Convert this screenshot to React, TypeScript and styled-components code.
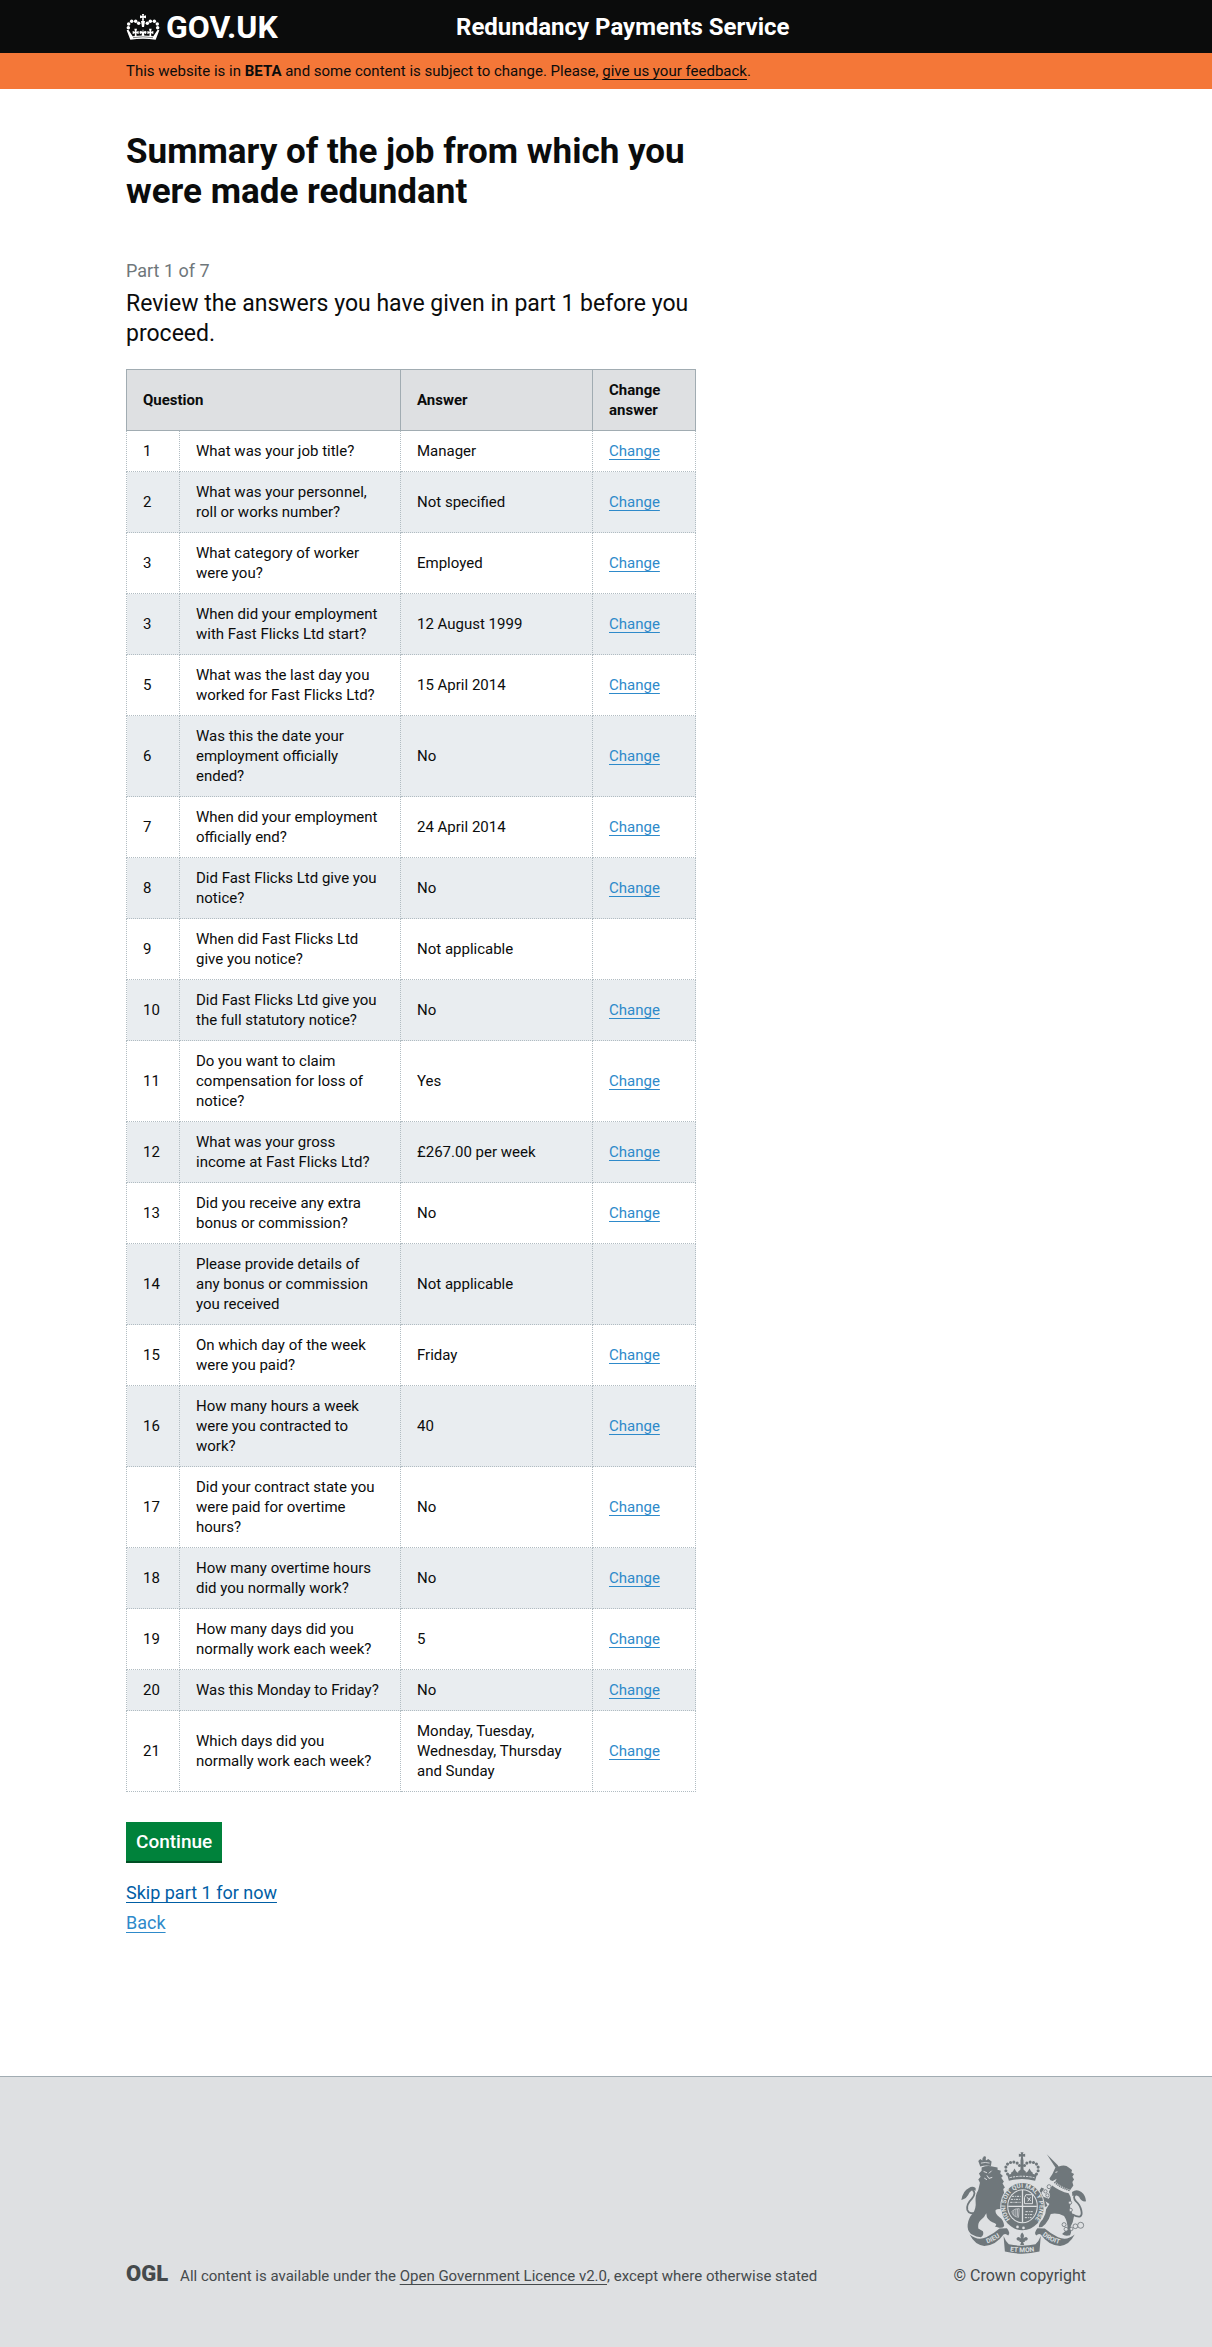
import React from "react";
import styled, { createGlobalStyle } from "styled-components";

const GlobalStyle = createGlobalStyle`
  body {
    margin: 0;
    background: #fff;
    color: #0b0c0c;
    font-family: Roboto, "Liberation Sans", Arial, sans-serif;
  }
  *, *::before, *::after { box-sizing: border-box; }
`;

const Container = styled.div`
  max-width: 960px;
  margin: 0 auto;
`;

const Header = styled.header`
  background: #0b0c0c;
  color: #fff;
`;

const HeaderInner = styled(Container)`
  display: grid;
  grid-template-columns: 1fr 2fr;
  column-gap: 15px;
  align-items: center;
  height: 53px;
`;

const LogoLink = styled.a`
  display: flex;
  align-items: center;
  gap: 6px;
  color: #fff;
  font-size: 32px;
  font-weight: 700;
  line-height: 40px;
  text-decoration: none;

  svg {
    display: block;
  }
`;

const ServiceName = styled.div`
  font-size: 24px;
  font-weight: 700;
  line-height: 30px;
`;

const BetaBar = styled.div`
  background: #f47738;
  font-size: 15px;
  line-height: 20px;
  padding: 8px 0;
`;

const TextLink = styled.a<{ $color: string }>`
  color: ${(p) => p.$color};
  text-decoration: underline;
  text-decoration-thickness: 1px;
  text-underline-offset: 3px;
  text-decoration-skip-ink: none;
`;

const Content = styled.div`
  max-width: 570px;
  padding: 43px 0 138px;
`;

const Title = styled.h1`
  margin: 0 0 46px;
  font-size: 35px;
  font-weight: 700;
  line-height: 40px;
`;

const PartLabel = styled.p`
  margin: 0 0 6px;
  color: #6f777b;
  font-size: 18px;
  line-height: 25px;
`;

const Lead = styled.p`
  margin: 0 0 20px;
  font-size: 23px;
  line-height: 30px;
`;

const Table = styled.table`
  width: 100%;
  table-layout: fixed;
  border-collapse: collapse;
  font-size: 15px;
  line-height: 20px;

  tbody tr:nth-child(even) {
    background: #e9edf0;
  }
`;

const Col = styled.col<{ $width: string }>`
  width: ${(p) => p.$width};
`;

const HeadCell = styled.th`
  padding: 10px 16px;
  background: #dee0e2;
  border: 1px solid #a1acb2;
  font-weight: 700;
  text-align: left;
  vertical-align: middle;
`;

const Cell = styled.td`
  padding: 10px 16px;
  border: 1px dotted #b1bcc2;
  vertical-align: middle;
`;

const Actions = styled.div`
  display: flex;
  flex-direction: column;
  align-items: flex-start;
  margin-top: 30px;
  font-size: 18px;
  line-height: 30px;
`;

const ContinueButton = styled.button`
  margin: 0 0 17px;
  padding: 7px 10px;
  border: 0;
  background: #00823b;
  box-shadow: 0 2px 0 #004f24;
  color: #fff;
  font: 500 19px/25px Roboto, "Liberation Sans", Arial, sans-serif;
  cursor: pointer;
`;

const Footer = styled.footer`
  padding: 75px 0 61px;
  background: #dee0e2;
  border-top: 1px solid #a1acb2;
  color: #454a4c;
  font-size: 15px;
  line-height: 20px;
`;

const FooterInner = styled(Container)`
  display: flex;
  align-items: flex-end;
  justify-content: space-between;
`;

const Licence = styled.div`
  display: flex;
  align-items: baseline;
  gap: 12px;
`;

const OglMark = styled.span`
  font-size: 22px;
  font-weight: 900;
`;

const Copyright = styled.div`
  display: flex;
  flex-direction: column;
  align-items: flex-end;
  gap: 12px;
  font-size: 16px;

  svg {
    display: block;
  }
`;

type Answer = { no: number; question: string; answer: string; fixed?: boolean };

const answers: Answer[] = [
  { no: 1, question: "What was your job title?", answer: "Manager" },
  { no: 2, question: "What was your personnel, roll or works number?", answer: "Not specified" },
  { no: 3, question: "What category of worker were you?", answer: "Employed" },
  { no: 3, question: "When did your employment with Fast Flicks Ltd start?", answer: "12 August 1999" },
  { no: 5, question: "What was the last day you worked for Fast Flicks Ltd?", answer: "15 April 2014" },
  { no: 6, question: "Was this the date your employment officially ended?", answer: "No" },
  { no: 7, question: "When did your employment officially end?", answer: "24 April 2014" },
  { no: 8, question: "Did Fast Flicks Ltd give you notice?", answer: "No" },
  { no: 9, question: "When did Fast Flicks Ltd give you notice?", answer: "Not applicable", fixed: true },
  { no: 10, question: "Did Fast Flicks Ltd give you the full statutory notice?", answer: "No" },
  { no: 11, question: "Do you want to claim compensation for loss of notice?", answer: "Yes" },
  { no: 12, question: "What was your gross income at Fast Flicks Ltd?", answer: "£267.00 per week" },
  { no: 13, question: "Did you receive any extra bonus or commission?", answer: "No" },
  { no: 14, question: "Please provide details of any bonus or commission you received", answer: "Not applicable", fixed: true },
  { no: 15, question: "On which day of the week were you paid?", answer: "Friday" },
  { no: 16, question: "How many hours a week were you contracted to work?", answer: "40" },
  { no: 17, question: "Did your contract state you were paid for overtime hours?", answer: "No" },
  { no: 18, question: "How many overtime hours did you normally work?", answer: "No" },
  { no: 19, question: "How many days did you normally work each week?", answer: "5" },
  { no: 20, question: "Was this Monday to Friday?", answer: "No" },
  { no: 21, question: "Which days did you normally work each week?", answer: "Monday, Tuesday, Wednesday, Thursday and Sunday" },
];

function CrownLogo() {
  const pearls = [
    [86, 79], [87, 68], [96, 60], [108, 60], [117, 66],
    [174, 79], [173, 68], [164, 60], [152, 60], [143, 66],
  ];
  return (
    <svg width="34" height="26" viewBox="79 38 102 78" fill="#fff" aria-hidden="true">
      {pearls.map(([x, y]) => (
        <circle key={`${x}-${y}`} cx={x} cy={y} r="5.2" />
      ))}
      <path d="M127 38h6l-1 6 7-2v9l-7-2 1 9h-6l1-9-7 2v-9l7 2z" />
      <path d="M124 59h12l-3 18h-6z" />
      <path d="M81 87l5-2 13 20q31-5 62 0l13-20 5 2-11 28q-38-5-76 0z" />
      <path d="M105 105l1-9-7 2v-9l7 2-2-9h8l-2 9 7-2v9l-7-2 1 9z" />
      <path d="M155 105l-1-9 7 2v-9l-7 2 2-9h-8l2 9-7-2v9l7-2-1 9z" />
      <path d="M126 104l1-8-6 2-2-7 5-3 4 4 2-9 2 9 4-4 5 3-2 7-6-2 1 8z" />
      <path d="M100 109q30-5 60 0" fill="none" stroke="#0b0c0c" strokeWidth="1.5" />
    </svg>
  );
}

function RoyalArms() {
  const ink = "#6f777b";
  const paper = "#dee0e2";
  const chain = [
    [372, 284, 6], [378, 298, 6], [394, 297, 5], [406, 289, 7], [422, 286, 9],
    [390, 218, 5], [392, 240, 5], [316, 184, 5], [327, 170, 6], [322, 196, 5],
  ];
  const pearls = [
    [202, 132], [197, 122], [197, 111], [202, 102], [211, 97], [221, 96], [231, 99], [238, 106],
    [289, 132], [294, 122], [294, 111], [289, 102], [280, 97], [270, 96], [260, 99], [253, 106],
  ];
  return (
    <svg width="125" height="102" viewBox="62 66 376 306" fill={ink} role="img" aria-label="Royal coat of arms">
      <defs>
        <path id="garter" d="M213 271A51 56 0 1 1 281 271" />
        <path id="ribbonLeft" d="M128 344Q160 338 190 312" />
        <path id="ribbonMid" d="M196 362Q246 372 296 362" />
        <path id="ribbonRight" d="M300 310Q328 337 366 344" />
      </defs>

      <path d="M120 109l-6-16 6-6 6 4 1-8h9l1 8 7-4 10 7-2 14q-15-4-32 1z" />
      <circle cx="133" cy="82" r="4" />
      <path d="M122 99q13-4 26 0" fill="none" stroke={paper} strokeWidth="2.5" />
      <path d="M124 112Q142 105 160 110L172 112 172 119 182 122 180 130 188 138 183 143 191 154 187 160 194 172 189 177 192 190Q186 200 186 222L188 240Q176 234 166 240 164 252 178 262 190 270 192 288 186 297 172 292L164 290Q172 284 164 280 148 276 140 262L138 250Q132 264 120 272 112 280 114 296L128 304Q132 316 122 322L108 320 92 312Q80 302 82 284 84 264 98 250 108 234 106 216 104 196 114 180L119 158 114 148 121 140 116 130 124 122Z" />
      <path d="M130 124l10 4M154 122l-8 8M140 136l6 9 10-3M132 144l8 5" fill="none" stroke={paper} strokeWidth="3" />
      <path d="M112 246q-25 10-31-6-4-16 14-34 14-18 2-26" fill="none" stroke={ink} strokeWidth="5.5" />
      <path d="M106 174q-10-8-20 0-18 8-23 36 17-4 24-22 8-10 19-6z" />

      <path d="M320 72L354 106 346 112Z" />
      <path d="M346 112L350 104 356 109Q376 102 386 112L396 120 394 127 402 132 397 140 402 148 397 156 400 166 388 184Q364 180 342 160L350 146 338 153Q329 152 328 145L337 132Z" />
      <path d="M346 127l6-2" stroke={paper} strokeWidth="3" />
      <path d="M342 158Q362 176 388 183" fill="none" stroke={paper} strokeWidth="9" />
      <path d="M343 156Q363 174 389 181" fill="none" stroke={ink} strokeWidth="5" strokeDasharray="4 2" />
      <path d="M336 166Q360 184 386 190 398 210 390 228 390 242 402 258 400 276 392 290 396 306 390 316 374 320 366 312L382 298Q384 276 372 258 352 248 332 252 328 268 316 282 306 294 296 292 296 280 308 268 318 252 318 238L328 222 316 214 322 228 312 232 298 202Q294 184 304 172L312 176 304 188 310 200 326 206Q334 196 326 186Z" />
      <path d="M398 254q32 16 26-12-4-18-16-28-12-14 0-22" fill="none" stroke={ink} strokeWidth="5.5" />
      <path d="M396 186q14-10 28 0 13 10 14 28-14 2-21-14-8-8-20-2z" />
      {chain.map(([x, y, r]) => (
        <circle key={`${x}-${y}`} cx={x} cy={y} r={r} fill={paper} stroke={ink} strokeWidth="2.5" />
      ))}

      <path d="M241 66h9l-2 6 7-1v9l-7-1 2 14h-9l2-14-7 1v-9l7 1z" />
      {pearls.map(([x, y]) => (
        <circle key={`${x}-${y}`} cx={x} cy={y} r="4.6" />
      ))}
      <path d="M241 92h9v26l8 8-6 10h-13l-6-10 8-8z" />
      <path d="M216 136q-8-8 2-12l5-9 5 9q9 4 2 12zM261 136q-8-8 2-12l5-9 5 9q9 4 2 12z" />
      <path d="M201 134q45-12 89 0l-5 18q-40-10-79 0z" />
      <path d="M208 143q38-9 75 0" fill="none" stroke={paper} strokeWidth="3" strokeDasharray="7 3" />

      <ellipse cx="247" cy="230" rx="67" ry="74" fill={paper} />
      <ellipse cx="247" cy="230" rx="64" ry="71" />
      <ellipse cx="247" cy="229" rx="46" ry="51" fill={paper} />
      <ellipse cx="247" cy="229" rx="43" ry="48" />
      <path d="M247 180v98M204 229h86" stroke={paper} strokeWidth="4" />
      <path d="M215 199h27M212 208h30M210 217h32M256 245h24M254 254h26M254 263h20" stroke={paper} strokeWidth="3" strokeDasharray="7 3 3 2" />
      <path d="M257 194h20v27h-24v-18zM263 214l8-12M260 202l12 10" fill="none" stroke={paper} strokeWidth="3" />
      <path d="M215 244q9-9 22-8l-2 26q-18-2-20-18zM221 241v15M227 238v21M232 237v22" fill="none" stroke={paper} strokeWidth="2" />
      <g fill={paper} fontFamily="Roboto, sans-serif" fontWeight="700">
        <text fontSize="19" textAnchor="middle">
          <textPath href="#garter" startOffset="50%">HONI SOIT QUI MAL Y PENSE</textPath>
        </text>
      </g>
      <circle cx="232" cy="291" r="4" fill={paper} />
      <circle cx="250" cy="294" r="4" fill={paper} />

      <path d="M88 314Q112 334 138 322 160 312 178 296L200 295Q212 309 204 317 196 309 190 314 166 348 132 348 104 346 88 314Z" />
      <path d="M404 314Q380 334 354 322 332 312 314 296L292 295Q280 309 288 317 296 309 302 314 326 348 360 348 388 346 404 314Z" />
      <path d="M190 318Q196 334 206 343 246 352 286 343 296 334 302 318L298 365Q246 378 194 365Z" />
      <path d="M246 308q9 9 3 18 10-10 14 0 0 8-9 6v4h-5l3 9h-12l3-9h-5v-4q-9 2-9-6 4-10 14 0-6-9 3-18z" />
      <g fill={paper} fontFamily="Roboto, sans-serif" fontWeight="700" fontSize="20" textAnchor="middle">
        <text><textPath href="#ribbonLeft" startOffset="50%">DIEU</textPath></text>
        <text><textPath href="#ribbonMid" startOffset="50%">ET MON</textPath></text>
        <text><textPath href="#ribbonRight" startOffset="50%">DROIT</textPath></text>
      </g>
    </svg>
  );
}

export default function App() {
  return (
    <>
      <GlobalStyle />
      <Header>
        <HeaderInner>
          <LogoLink href="#">
            <CrownLogo />
            GOV.UK
          </LogoLink>
          <ServiceName>Redundancy Payments Service</ServiceName>
        </HeaderInner>
      </Header>
      <BetaBar>
        <Container>
          This website is in <strong>BETA</strong> and some content is subject to change. Please,{" "}
          <TextLink $color="#0b0c0c" href="#">give us your feedback</TextLink>.
        </Container>
      </BetaBar>

      <Container as="main">
        <Content>
          <Title>Summary of the job from which you were made redundant</Title>
          <PartLabel>Part 1 of 7</PartLabel>
          <Lead>Review the answers you have given in part 1 before you proceed.</Lead>

          <Table>
            <colgroup>
              <Col $width="53px" />
              <Col $width="221px" />
              <Col $width="192px" />
              <Col $width="auto" />
            </colgroup>
            <thead>
              <tr>
                <HeadCell scope="col" colSpan={2}>Question</HeadCell>
                <HeadCell scope="col">Answer</HeadCell>
                <HeadCell scope="col">Change answer</HeadCell>
              </tr>
            </thead>
            <tbody>
              {answers.map((row, i) => (
                <tr key={i}>
                  <Cell>{row.no}</Cell>
                  <Cell>{row.question}</Cell>
                  <Cell>{row.answer}</Cell>
                  <Cell>{!row.fixed && <TextLink $color="#2e8aca" href="#">Change</TextLink>}</Cell>
                </tr>
              ))}
            </tbody>
          </Table>

          <Actions>
            <ContinueButton type="button">Continue</ContinueButton>
            <TextLink $color="#005ea5" href="#">Skip part 1 for now</TextLink>
            <TextLink $color="#2e8aca" href="#">Back</TextLink>
          </Actions>
        </Content>
      </Container>

      <Footer>
        <FooterInner>
          <Licence>
            <OglMark>OGL</OglMark>
            <span>
              All content is available under the{" "}
              <TextLink $color="#454a4c" href="#">Open Government Licence v2.0</TextLink>, except where
              otherwise stated
            </span>
          </Licence>
          <Copyright>
            <RoyalArms />
            <span>© Crown copyright</span>
          </Copyright>
        </FooterInner>
      </Footer>
    </>
  );
}
